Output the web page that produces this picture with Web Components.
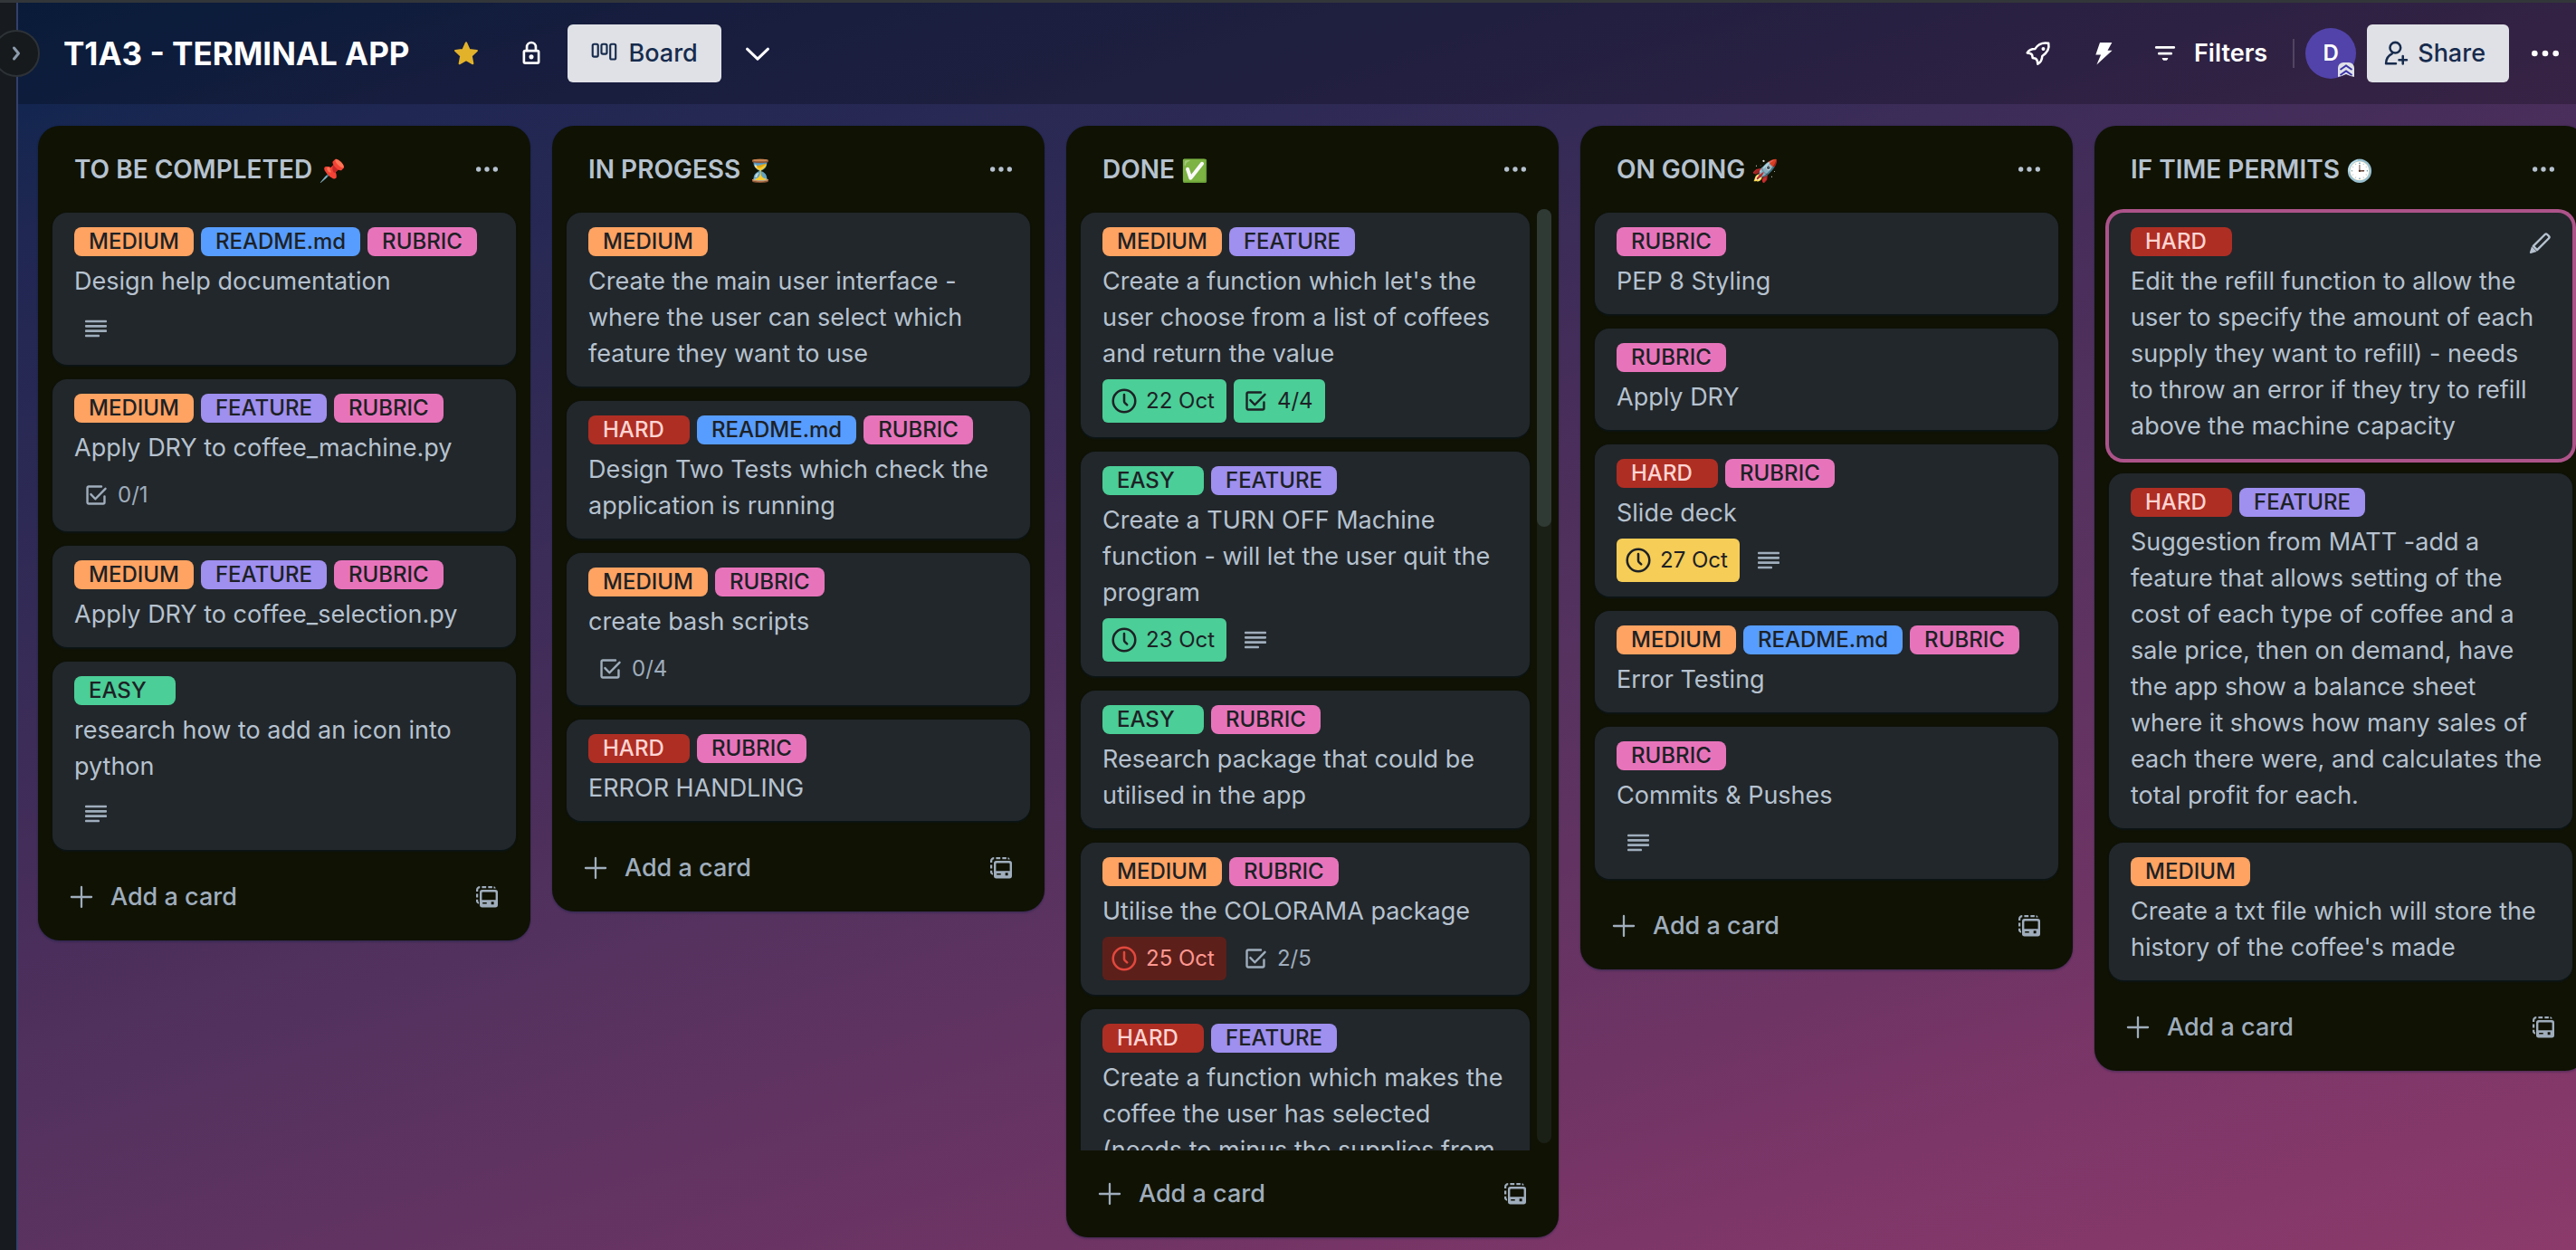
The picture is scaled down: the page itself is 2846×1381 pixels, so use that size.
<!DOCTYPE html>
<html lang="en">
<head>
<meta charset="utf-8">
<title>T1A3 - TERMINAL APP</title>
<style>
  html, body { margin: 0; height: 100%; }
  body {
    font-family: Inter, "Liberation Sans", sans-serif;
    font-size: 27px;
    line-height: 40px;
    color: #b6c2cf;
    background: #161a1d;
    overflow: hidden;
  }
</style>
</head>
<body>
<board-app>
  <board-header slot="header" name="T1A3 - TERMINAL APP"></board-header>

  <board-list name="TO BE COMPLETED" emoji="📌">
    <board-card>
      <card-label slot="labels" tone="orange">MEDIUM</card-label><card-label slot="labels" tone="blue">README.md</card-label><card-label slot="labels" tone="pink">RUBRIC</card-label>
      Design help documentation
      <card-badge slot="badges" icon="text"></card-badge>
    </board-card>
    <board-card>
      <card-label slot="labels" tone="orange">MEDIUM</card-label><card-label slot="labels" tone="purple">FEATURE</card-label><card-label slot="labels" tone="pink">RUBRIC</card-label>
      Apply DRY to coffee_machine.py
      <card-badge slot="badges" icon="check">0/1</card-badge>
    </board-card>
    <board-card>
      <card-label slot="labels" tone="orange">MEDIUM</card-label><card-label slot="labels" tone="purple">FEATURE</card-label><card-label slot="labels" tone="pink">RUBRIC</card-label>
      Apply DRY to coffee_selection.py
    </board-card>
    <board-card>
      <card-label slot="labels" tone="green">EASY</card-label>
      research how to add an icon into python
      <card-badge slot="badges" icon="text"></card-badge>
    </board-card>
  </board-list>

  <board-list name="IN PROGESS" emoji="⏳">
    <board-card>
      <card-label slot="labels" tone="orange">MEDIUM</card-label>
      Create the main user interface - where the user can select which feature they want to use
    </board-card>
    <board-card>
      <card-label slot="labels" tone="red">HARD</card-label><card-label slot="labels" tone="blue">README.md</card-label><card-label slot="labels" tone="pink">RUBRIC</card-label>
      Design Two Tests which check the application is running
    </board-card>
    <board-card>
      <card-label slot="labels" tone="orange">MEDIUM</card-label><card-label slot="labels" tone="pink">RUBRIC</card-label>
      create bash scripts
      <card-badge slot="badges" icon="check">0/4</card-badge>
    </board-card>
    <board-card>
      <card-label slot="labels" tone="red">HARD</card-label><card-label slot="labels" tone="pink">RUBRIC</card-label>
      ERROR HANDLING
    </board-card>
  </board-list>

  <board-list name="DONE" emoji="✅" scrolls>
    <board-card>
      <card-label slot="labels" tone="orange">MEDIUM</card-label><card-label slot="labels" tone="purple">FEATURE</card-label>
      Create a function which let's the user choose from a list of coffees and return the value
      <card-badge slot="badges" icon="clock" tone="done">22 Oct</card-badge><card-badge slot="badges" icon="check" tone="done">4/4</card-badge>
    </board-card>
    <board-card>
      <card-label slot="labels" tone="green">EASY</card-label><card-label slot="labels" tone="purple">FEATURE</card-label>
      Create a TURN OFF Machine function - will let the user quit the program
      <card-badge slot="badges" icon="clock" tone="done">23 Oct</card-badge><card-badge slot="badges" icon="text"></card-badge>
    </board-card>
    <board-card>
      <card-label slot="labels" tone="green">EASY</card-label><card-label slot="labels" tone="pink">RUBRIC</card-label>
      Research package that could be utilised in the app
    </board-card>
    <board-card>
      <card-label slot="labels" tone="orange">MEDIUM</card-label><card-label slot="labels" tone="pink">RUBRIC</card-label>
      Utilise the COLORAMA package
      <card-badge slot="badges" icon="clock" tone="late">25 Oct</card-badge><card-badge slot="badges" icon="check">2/5</card-badge>
    </board-card>
    <board-card>
      <card-label slot="labels" tone="red">HARD</card-label><card-label slot="labels" tone="purple">FEATURE</card-label>
      Create a function which makes the coffee the user has selected (needs to minus the supplies from
    </board-card>
  </board-list>

  <board-list name="ON GOING" emoji="🚀">
    <board-card>
      <card-label slot="labels" tone="pink">RUBRIC</card-label>
      PEP 8 Styling
    </board-card>
    <board-card>
      <card-label slot="labels" tone="pink">RUBRIC</card-label>
      Apply DRY
    </board-card>
    <board-card>
      <card-label slot="labels" tone="red">HARD</card-label><card-label slot="labels" tone="pink">RUBRIC</card-label>
      Slide deck
      <card-badge slot="badges" icon="clock" tone="soon">27 Oct</card-badge><card-badge slot="badges" icon="text"></card-badge>
    </board-card>
    <board-card>
      <card-label slot="labels" tone="orange">MEDIUM</card-label><card-label slot="labels" tone="blue">README.md</card-label><card-label slot="labels" tone="pink">RUBRIC</card-label>
      Error Testing
    </board-card>
    <board-card>
      <card-label slot="labels" tone="pink">RUBRIC</card-label>
      Commits &amp; Pushes
      <card-badge slot="badges" icon="text"></card-badge>
    </board-card>
  </board-list>

  <board-list name="IF TIME PERMITS" emoji="🕒">
    <board-card active>
      <card-label slot="labels" tone="red">HARD</card-label>
      Edit the refill function to allow the user to specify the amount of each supply they want to refill) - needs to&nbsp;throw an error if they try to refill above the machine capacity
    </board-card>
    <board-card>
      <card-label slot="labels" tone="red">HARD</card-label><card-label slot="labels" tone="purple">FEATURE</card-label>
      Suggestion from MATT -add a feature that allows setting of the cost of each type of coffee and a sale price, then on demand, have the app show a balance sheet where it shows how many sales of each there were, and calculates the total profit for each.
    </board-card>
    <board-card>
      <card-label slot="labels" tone="orange">MEDIUM</card-label>
      Create a txt file which will store the history of the coffee's made
    </board-card>
  </board-list>
</board-app>

<script>
const line = 'fill="none" stroke="currentColor" stroke-linecap="round" stroke-linejoin="round"';
const ICONS = {
  text: '<g fill="currentColor"><rect x="3" y="5" width="18" height="2" rx=".6"/><rect x="3" y="9" width="18" height="2" rx=".6"/><rect x="3" y="13" width="18" height="2" rx=".6"/><rect x="3" y="17" width="12" height="2" rx=".6"/></g>',
  check: `<g ${line} stroke-width="1.8"><path d="M16.5 4.9H6A1.1 1.1 0 0 0 4.9 6v12A1.1 1.1 0 0 0 6 19.1h12a1.1 1.1 0 0 0 1.1-1.1v-5"/><path d="M7.8 11.3l3.7 3.9 8.4-8.6"/></g>`,
  clock: `<g ${line} stroke-width="1.9"><circle cx="12" cy="12" r="9.2"/><path d="M12 6.8v5.4c0 .6.2 1 .6 1.4l1.8 1.7"/></g>`,
  dots: '<g fill="currentColor"><circle cx="5" cy="12" r="2"/><circle cx="12" cy="12" r="2"/><circle cx="19" cy="12" r="2"/></g>',
  plus: `<path ${line} stroke-width="1.7" d="M12 3.7v16.6M3.7 12h16.6"/>`,
  template: '<g fill="currentColor"><path d="M3 6.2C3 4.4 4.400 3 6.200 3v1.700C5.300 4.700 4.700 5.300 4.700 6.200V7.500H3zM3 9.300h1.700v3H3zM3 14h1.700v1.600l.6.7v1.500C4 17.600 3 16.600 3 15.400zM7.800 3h3.600v1.600H7.800zM13 3h3.400v1.600H13zM17.600 3.100c1 .2 1.500.700 1.700 1.700h-1.700z"/><path fill-rule="evenodd" d="M8 6h11a2 2 0 0 1 2 2v10.600a2 2 0 0 1-2 2H8a2 2 0 0 1-2-2V8a2 2 0 0 1 2-2zm-.2 2.600v5.900h11.400V8.600a.8.8 0 0 0-.8-.8H8.600a.8.8 0 0 0-.8.800zM8.400 16.500v1.200h3.400v-1.200zM15.500 16v2.200h2.200V16z"/></g>',
  pencil: `<path fill="none" stroke="currentColor" stroke-width="1.8" stroke-linejoin="round" d="M6.600 14.200L16.300 4.500a1.300 1.300 0 0 1 1.800 0l1.400 1.400a1.300 1.300 0 0 1 0 1.800L9.800 17.400z"/><path fill="currentColor" d="M5.300 14.500l4.200 4.200-5 1.500a.7.7 0 0 1-.8-.8z"/>`,
  star: '<path fill="currentColor" stroke="currentColor" stroke-width="1.6" stroke-linejoin="round" d="M12 3.200l2.600 5.800 6.300.8-4.600 4.300 1.200 6.300-5.500-3.100-5.500 3.100 1.200-6.300-4.600-4.300 6.300-.8z"/>',
  lock: `<path fill="none" stroke="currentColor" stroke-width="2" d="M8.300 9.500V6.700a3.700 3.700 0 0 1 7.400 0v2.800"/><rect x="5.900" y="9.800" width="12.200" height="10.200" rx="1" fill="none" stroke="currentColor" stroke-width="2"/><circle cx="12" cy="14.900" r="1.900" fill="currentColor"/>`,
  board: '<g fill="none" stroke="currentColor" stroke-width="1.600"><rect x="1.300" y="4.300" width="4.500" height="10.400" rx="1.200"/><rect x="8.600" y="4.300" width="4.500" height="8.200" rx="1.200"/><rect x="15.900" y="4.300" width="4.500" height="12.600" rx="1.200"/></g>',
  chevron: `<path ${line} stroke-width="2.300" d="M3.400 8.400L12 16.600l8.600-8.200"/>`,
  rocket: `<path ${line} stroke-width="1.900" d="M20.400 3.600c-5-.9-9 1.300-11.200 4.700-3 0-5.200 1.200-6.400 3.300 1.800 0 3.400.6 4 1.600l.5 2.600 2.500.5c1 .8 1.700 2.500 1.700 4.500 2.200-1.300 3.600-3.800 3.700-6.600 3.800-2.500 6.200-6 5.200-10.600z"/><circle cx="16.100" cy="8.200" r="1.500" fill="currentColor"/>`,
  bolt: '<path fill="currentColor" d="M9 3h10l-3.600 6.600h3.800L6.300 21.300l3.500-8.200H5.500z"/>',
  filter: `<g fill="currentColor"><rect x="3.700" y="6" width="16.600" height="2.100" rx="1"/><rect x="6" y="11" width="12" height="2.100" rx="1"/><path d="M10 15.800h4a.5.5 0 0 1 .3.8l-1 1.300H10.700l-1-1.300a.5.5 0 0 1 .3-.8z"/></g>`,
  person: `<g ${line} stroke-width="1.900"><circle cx="11.500" cy="7.300" r="4.400"/><path d="M12 20.500H3.800c0-4 1.600-6.600 5-8.200M17.800 14.200v6.400M14.600 17.400H21"/></g>`,
  expand: `<path ${line} stroke-width="3" d="M9.500 6l5 6-5 6"/>`
};

class AppIcon extends HTMLElement {
  constructor() {
    super();
    this.attachShadow({ mode: 'open' }).innerHTML = `
      <style>
        :host { display: block; flex: none; width: 32px; height: 32px; }
        svg { display: block; width: 100%; height: 100%; }
      </style>
      <svg viewBox="0 0 24 24" aria-hidden="true">${ICONS[this.getAttribute('name')]}</svg>`;
  }
}

class CardLabel extends HTMLElement {
  constructor() {
    super();
    this.attachShadow({ mode: 'open' }).innerHTML = `
      <style>
        :host {
          display: block; box-sizing: border-box; min-width: 112px; height: 32px;
          padding: 0 16px; border-radius: 8px;
          font-size: 24px; line-height: 32px; font-weight: 500; color: #1d2125;
        }
        :host([tone=orange]) { background: #fea362; }
        :host([tone=blue]) { background: #579dff; }
        :host([tone=pink]) { background: #e774bb; }
        :host([tone=purple]) { background: #9f8fef; }
        :host([tone=green]) { background: #4bce97; }
        :host([tone=red]) { background: #ae2e24; color: #ffd5d2; }
      </style>
      <slot></slot>`;
  }
}

class CardBadge extends HTMLElement {
  constructor() {
    super();
    this.attachShadow({ mode: 'open' }).innerHTML = `
      <style>
        :host {
          display: flex; align-items: center; box-sizing: border-box; height: 48px;
          padding: 0 8px; border-radius: 6px;
          font-size: 24px; line-height: 32px; color: #9fadbc;
        }
        span { padding: 0 5px 0 8px; }
        :host([tone=done]) { background: #4bce97; color: #1d2125; }
        :host([tone=soon]) { background: #f5cd57; color: #1d2125; }
        :host([tone=late]) { background: #5d1f1a; color: #fd9891; }
        :host([tone=late]) app-icon { color: #e2483d; }
      </style>
      <app-icon name="${this.getAttribute('icon')}"></app-icon>
      ${this.textContent.trim() ? '<span><slot></slot></span>' : ''}`;
  }
}

class BoardCard extends HTMLElement {
  constructor() {
    super();
    const hasBadges = this.querySelector('card-badge');
    this.attachShadow({ mode: 'open' }).innerHTML = `
      <style>
        :host {
          display: block; position: relative; padding: 16px 24px;
          border-radius: 16px; background: #22272b;
          box-shadow: 0 2px 2px #091e4240, 0 0 2px #091e424f;
        }
        :host([active]) { box-shadow: 0 0 0 4px #ad538a; }
        .labels, .badges { display: flex; gap: 8px; }
        .title { margin: 8px 0 0; overflow-wrap: anywhere; }
        .badges { margin-top: 8px; }
        button {
          position: absolute; top: 6px; right: 8px; width: 56px; height: 56px;
          display: grid; place-items: center; padding: 0; border: 0;
          background: none; color: #b6c2cf;
        }
      </style>
      <div class="labels"><slot name="labels"></slot></div>
      <p class="title"><slot></slot></p>
      ${hasBadges ? '<div class="badges"><slot name="badges"></slot></div>' : ''}
      ${this.hasAttribute('active') ? '<button aria-label="Edit card"><app-icon name="pencil"></app-icon></button>' : ''}`;
  }
}

class BoardList extends HTMLElement {
  constructor() {
    super();
    this.attachShadow({ mode: 'open' }).innerHTML = `
      <style>
        :host {
          display: flex; flex-direction: column; flex: none; box-sizing: border-box;
          width: 544px; max-height: 100%; border-radius: 24px;
          background: #101204; box-shadow: 0 2px 2px #091e4240, 0 0 2px #091e424f;
        }
        header { display: flex; align-items: center; flex: none; height: 92px; padding: 4px 16px 0 40px; box-sizing: border-box; }
        h2 { flex: 1; margin: 0; font-size: 28px; line-height: 40px; font-weight: 600; }
        .emoji { font-size: 24px; line-height: 32px; }
        button {
          display: flex; align-items: center; border: 0; padding: 0; background: none;
          font: inherit; color: #9fadbc;
        }
        .square { width: 64px; height: 64px; justify-content: center; }
        header .square { color: #b6c2cf; }
        .body { display: flex; min-height: 0; margin: 0 8px; }
        .cards {
          flex: 1; min-width: 0; display: flex; flex-direction: column; gap: 16px;
          padding: 4px 8px; overflow: visible;
        }
        :host([scrolls]) .cards { overflow: hidden; }
        ::slotted(board-card) { flex: none; }
        .track { flex: none; width: 16px; margin-bottom: 8px; border-radius: 8px; background: #1b2017; }
        .thumb { height: 34%; border-radius: 8px; background: #303a35; }
        footer { display: flex; align-items: center; flex: none; padding: 16px; }
        .add { flex: 1; height: 64px; padding: 0 16px; gap: 16px; font-weight: 500; }
      </style>
      <header>
        <h2>${this.getAttribute('name')} <span class="emoji">${this.getAttribute('emoji')}</span></h2>
        <button class="square" aria-label="List actions"><app-icon name="dots"></app-icon></button>
      </header>
      <div class="body">
        <div class="cards"><slot></slot></div>
        ${this.hasAttribute('scrolls') ? '<div class="track"><div class="thumb"></div></div>' : ''}
      </div>
      <footer>
        <button class="add"><app-icon name="plus"></app-icon>Add a card</button>
        <button class="square" aria-label="Create from template"><app-icon name="template"></app-icon></button>
      </footer>`;
  }
}

class BoardHeader extends HTMLElement {
  constructor() {
    super();
    this.attachShadow({ mode: 'open' }).innerHTML = `
      <style>
        :host {
          display: flex; align-items: center; justify-content: space-between;
          height: 112px; padding: 0 2px 0 30px; box-sizing: border-box;
          background: #0000003d; color: #fff;
        }
        div { display: flex; align-items: center; gap: 8px; }
        h1 { margin: 0; padding: 0 22px 0 20px; font-size: 35px; line-height: 48px; font-weight: 700; white-space: nowrap; }
        button {
          display: flex; align-items: center; justify-content: center;
          min-width: 64px; height: 64px; padding: 0; border: 0; border-radius: 6px;
          background: none; font: inherit; font-weight: 600; color: inherit;
        }
        .star { color: #e2b22b; }
        .light { background: #dfe1e6; color: #172b4d; font-weight: 500; }
        .view { padding: 0 26px; gap: 10px; }
        .filters { padding: 0 20px 0 12px; gap: 16px; }
        .share { padding: 0 26px 0 16px; gap: 8px; }
        hr { width: 2px; height: 32px; margin: 0 4px 0 0; border: 0; background: #ffffff29; }
        .avatar {
          position: relative; width: 56px; height: 56px; margin-right: 4px; border-radius: 50%;
          justify-content: center; background: #5243aa; font-size: 24px; line-height: 32px; font-weight: 600;
        }
        .avatar svg { position: absolute; right: 2px; bottom: 2px; width: 18px; height: 16px; }
        .more app-icon { width: 40px; height: 40px; }
      </style>
      <div>
        <h1>${this.getAttribute('name')}</h1>
        <button class="star" aria-label="Starred"><app-icon name="star"></app-icon></button>
        <button aria-label="Visibility"><app-icon name="lock"></app-icon></button>
        <button class="light view"><app-icon name="board"></app-icon>Board</button>
        <button aria-label="Views"><app-icon name="chevron"></app-icon></button>
      </div>
      <div>
        <button aria-label="Power-Ups"><app-icon name="rocket"></app-icon></button>
        <button aria-label="Automation"><app-icon name="bolt"></app-icon></button>
        <button class="filters"><app-icon name="filter"></app-icon>Filters</button>
        <hr>
        <div class="avatar">D
          <svg viewBox="0 0 18 16" aria-hidden="true">
            <path fill="#dfe1e6" d="M0 16V6a6 6 0 0 1 6-6h6a6 6 0 0 1 6 6v10l-4-1-5-2-5 2z"/>
            <path fill="none" stroke="#3a32a8" stroke-width="2" d="M2.500 8L9 3.500 15.500 8M2.500 14L9 9.500l6.500 4.500"/>
          </svg>
        </div>
        <button class="light share"><app-icon name="person"></app-icon>Share</button>
        <button class="more" aria-label="Menu"><app-icon name="dots"></app-icon></button>
      </div>`;
  }
}

class BoardApp extends HTMLElement {
  constructor() {
    super();
    this.attachShadow({ mode: 'open' }).innerHTML = `
      <style>
        :host { display: flex; height: 100vh; box-sizing: border-box; border-top: 3px solid #333639; }
        nav { position: relative; flex: none; width: 18px; border-right: 2px solid #33406b; background: #171b20; }
        nav button {
          position: absolute; z-index: 1; top: 30px; left: -8px; width: 52px; height: 52px;
          display: grid; place-items: center; box-sizing: border-box; padding: 0;
          border: 2px solid #2d3237; border-radius: 50%; background: #161a1d; color: #8c9bab;
        }
        nav app-icon { width: 24px; height: 24px; }
        main {
          flex: 1; min-width: 0; display: flex; flex-direction: column;
          background: linear-gradient(162deg, #0d244c 0%, #13264f 5%, #1f2752 11%, #2d2a55 25%, #4b2e5b 46%, #55325f 55%, #6e3464 76%, #7d3668 85%, #8b3a6b 100%);
        }
        .lists {
          flex: 1; min-height: 0; display: flex; align-items: flex-start; gap: 24px;
          padding: 24px 22px 14px; overflow: hidden;
        }
      </style>
      <nav><button aria-label="Expand sidebar"><app-icon name="expand"></app-icon></button></nav>
      <main>
        <slot name="header"></slot>
        <div class="lists"><slot></slot></div>
      </main>`;
  }
}

customElements.define('app-icon', AppIcon);
customElements.define('card-label', CardLabel);
customElements.define('card-badge', CardBadge);
customElements.define('board-card', BoardCard);
customElements.define('board-list', BoardList);
customElements.define('board-header', BoardHeader);
customElements.define('board-app', BoardApp);
</script>
</body>
</html>
